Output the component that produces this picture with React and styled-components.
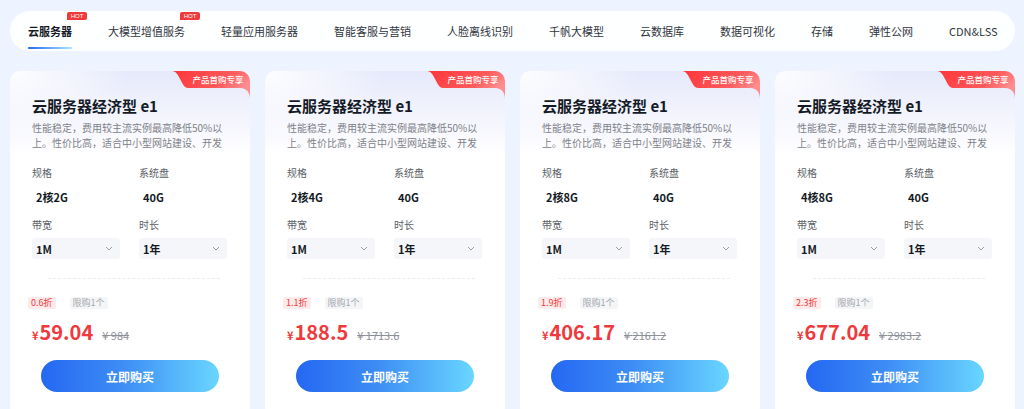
import React from "react";
import styled, { createGlobalStyle } from "styled-components";

const GlobalStyle = createGlobalStyle`
	body {
		margin: 0;
		background: #eef4ff;
		font-family: "Noto Sans CJK SC", "Noto Sans", sans-serif;
		overflow: hidden;
	}
`;

const Page = styled("div")`
	padding: 11px 9px 0 10px;
	display: flex;
	flex-direction: column;
	gap: 20px;
	height: 409px;
	box-sizing: border-box;
	overflow: hidden;
`;

const TabBar = styled("nav")`
	height: 40px;
	background: rgba(255, 255, 255, 0.92);
	border-radius: 20px;
	display: flex;
	align-items: center;
	gap: 36px;
	padding-left: 18px;
`;

const Tab = styled("div")`
	position: relative;
	height: 40px;
	display: flex;
	align-items: center;
	font-size: 11px;
	color: ${(p) => (p.$active ? "#151b26" : "#303540")};
	font-weight: ${(p) => (p.$active ? 700 : 400)};
	white-space: nowrap;

	&::after {
		content: "";
		display: ${(p) => (p.$active ? "block" : "none")};
		position: absolute;
		left: 0;
		right: 0;
		bottom: 2px;
		height: 2px;
		border-radius: 1px;
		background: linear-gradient(90deg, #2468f2, #a8e4ff);
	}
`;

const Hot = styled("span")`
	position: absolute;
	top: 1px;
	right: -15px;
	width: 20px;
	height: 8px;
	line-height: 8px;
	border-radius: 2px 2px 2px 0;
	background: #f0393c;
	color: #fff;
	font-family: "Liberation Sans", sans-serif;
	font-size: 6px;
	font-weight: 400;
	text-align: center;
`;

const Cards = styled("div")`
	display: grid;
	grid-template-columns: repeat(4, 240px);
	gap: 15px;
`;

const Card = styled("div")`
	position: relative;
	height: 345px;
	border-radius: 10px;
	overflow: hidden;
	padding: 25px 22px 0;
	box-sizing: border-box;
	background:
		radial-gradient(ellipse 120px 70px at 0 0, rgba(255, 255, 255, 0.95), rgba(255, 255, 255, 0)),
		linear-gradient(180deg, #e6e9fb 0px, #f3f4fd 45px, #ffffff 85px);
`;

const Ribbon = styled("div")`
	position: absolute;
	top: 0;
	right: 0;
	width: 78px;
	height: 28px;

	svg {
		position: absolute;
		inset: 0;
	}

	span {
		position: absolute;
		top: 0;
		left: 14px;
		right: 0;
		height: 17px;
		line-height: 17px;
		text-align: center;
		color: #fff;
		font-size: 8.5px;
		font-weight: 500;
	}
`;

const Title = styled("h3")`
	margin: 0;
	font-size: 15px;
	line-height: 20px;
	font-weight: 700;
	color: #151b26;
`;

const Desc = styled("p")`
	margin: 4px 0 0;
	font-size: 10px;
	line-height: 15px;
	height: 30px;
	color: #7e8188;
`;

const Specs = styled("div")`
	margin-top: 16px;
	display: grid;
	grid-template-columns: 88px 88px;
	column-gap: 19px;
`;

const Field = styled("div")`
	display: flex;
	flex-direction: column;
	margin-bottom: ${(p) => (p.$last ? 0 : "14px")};
`;

const Label = styled("span")`
	font-size: 10px;
	line-height: 14px;
	color: #5c5f66;
`;

const Value = styled("span")`
	margin-top: 10px;
	padding-left: 4px;
	font-size: 11px;
	line-height: 14px;
	font-weight: 700;
	color: #151b26;
`;

const Select = styled("div")`
	margin-top: 6px;
	height: 21px;
	border-radius: 3px;
	background: #f5f6f9;
	display: flex;
	align-items: center;
	justify-content: space-between;
	padding: 0 7px 0 4px;
	font-size: 11px;
	font-weight: 700;
	color: #151b26;
`;

const Divider = styled("div")`
	margin: 19px 8px 0 16px;
	border-top: 1px dashed #ebedf2;
`;

const Tags = styled("div")`
	margin: 18px 0 0 -4px;
	display: flex;
	gap: 14px;
`;

const Tag = styled("span")`
	height: 12px;
	line-height: 12px;
	padding: 0 3px;
	border-radius: 2px;
	font-size: 9px;
	color: ${(p) => (p.$red ? "#f0393c" : "#a3a6ad")};
	background: ${(p) => (p.$red ? "#fdeaea" : "#f4f5f7")};
`;

const PriceRow = styled("div")`
	margin-top: 11px;
	display: flex;
	align-items: baseline;
	gap: 9px;
	height: 24px;
`;

const Price = styled("span")`
	color: #f0393c;
	font-size: 20px;
	font-weight: 700;
	line-height: 24px;

	small {
		font-size: 11px;
		margin-right: 1px;
	}
`;

const OldPrice = styled("span")`
	color: #8d9098;
	font-size: 11px;
	text-decoration: line-through;
`;

const BuyButton = styled("button")`
	display: block;
	margin: 16px auto 0;
	width: 178px;
	height: 32px;
	border: none;
	border-radius: 16px;
	background: linear-gradient(90deg, #2468f2 0%, #3d8cf5 45%, #69d6ff 100%);
	color: #fff;
	font-family: inherit;
	font-size: 12px;
	font-weight: 700;
	cursor: pointer;
`;

const tabs = [
	{ name: "云服务器", active: true, hot: true },
	{ name: "大模型增值服务", hot: true },
	{ name: "轻量应用服务器" },
	{ name: "智能客服与营销" },
	{ name: "人脸离线识别" },
	{ name: "千帆大模型" },
	{ name: "云数据库" },
	{ name: "数据可视化" },
	{ name: "存储" },
	{ name: "弹性公网" },
	{ name: "CDN&LSS" },
];

const products = [
	{ spec: "2核2G", discount: "0.6折", price: "59.04", old: "984" },
	{ spec: "2核4G", discount: "1.1折", price: "188.5", old: "1713.6" },
	{ spec: "2核8G", discount: "1.9折", price: "406.17", old: "2161.2" },
	{ spec: "4核8G", discount: "2.3折", price: "677.04", old: "2983.2" },
];

const Chevron = () => (
	<svg width="8" height="5" viewBox="0 0 8 5">
		<path d="M1 1l3 3 3-3" fill="none" stroke="#9a9da5" strokeWidth="1" />
	</svg>
);

const RibbonShape = ({ id }) => (
	<svg width="78" height="28" viewBox="0 0 78 28">
		<defs>
			<linearGradient id={id} x1="0" y1="0" x2="1" y2="0.4">
				<stop offset="0" stopColor="#ff3438" />
				<stop offset="0.7" stopColor="#ff5a5c" />
				<stop offset="1" stopColor="#ff8d8f" />
			</linearGradient>
		</defs>
		<path
			d="M0 0H78V28C78 22 75 17 68 17H16C9 17 8 0 0 0Z"
			fill={`url(#${id})`}
		/>
	</svg>
);

const ProductCard = ({ item, index }) => (
	<Card>
		<Ribbon>
			<RibbonShape id={`rib${index}`} />
			<span>产品首购专享</span>
		</Ribbon>
		<Title>云服务器经济型 e1</Title>
		<Desc>性能稳定，费用较主流实例最高降低50%以上。性价比高，适合中小型网站建设、开发</Desc>
		<Specs>
			<Field>
				<Label>规格</Label>
				<Value>{item.spec}</Value>
			</Field>
			<Field>
				<Label>系统盘</Label>
				<Value>40G</Value>
			</Field>
			<Field $last>
				<Label>带宽</Label>
				<Select>
					1M
					<Chevron />
				</Select>
			</Field>
			<Field $last>
				<Label>时长</Label>
				<Select>
					1年
					<Chevron />
				</Select>
			</Field>
		</Specs>
		<Divider />
		<Tags>
			<Tag $red>{item.discount}</Tag>
			<Tag>限购1个</Tag>
		</Tags>
		<PriceRow>
			<Price>
				<small>¥</small>
				{item.price}
			</Price>
			<OldPrice>¥ {item.old}</OldPrice>
		</PriceRow>
		<BuyButton>立即购买</BuyButton>
	</Card>
);

const App = () => {
	return (
		<>
			<GlobalStyle />
			<Page>
				<TabBar>
					{tabs.map((t) => (
						<Tab key={t.name} $active={t.active}>
							{t.name}
							{t.hot && <Hot>HOT</Hot>}
						</Tab>
					))}
				</TabBar>
				<Cards>
					{products.map((p, i) => (
						<ProductCard key={p.spec} item={p} index={i} />
					))}
				</Cards>
			</Page>
		</>
	);
};

export default App;
